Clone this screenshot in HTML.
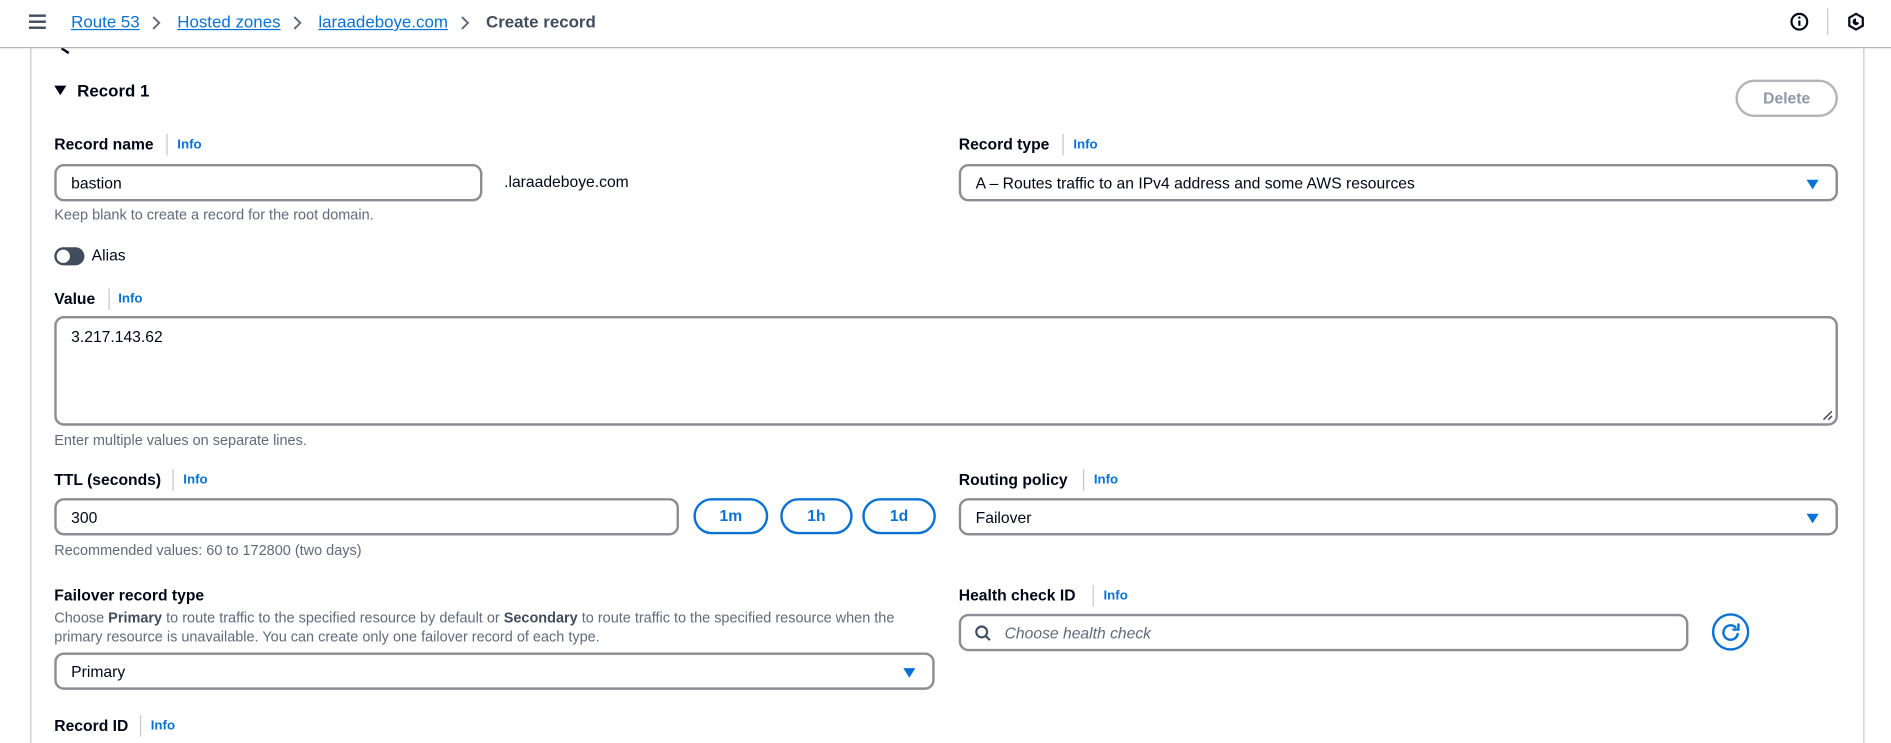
<!DOCTYPE html>
<html><head><meta charset="utf-8"><style>
*{box-sizing:border-box;margin:0;padding:0}
html,body{width:1891px;height:743px;overflow:hidden;background:#fff}
#w{position:absolute;left:0;top:0;width:1568px;height:616px;transform:scale(1.206);transform-origin:0 0;font-family:"Liberation Sans",sans-serif;color:#000716;font-size:13px}
.a{position:absolute;white-space:nowrap}
.lbl{font-weight:bold;font-size:13px}
.info{color:#0972d3;font-weight:bold;font-size:11px}
.sep{position:absolute;width:1px;height:18px;background:#c6c6cd}
.hint{color:#5f6b7a;font-size:12px}
.inp{position:absolute;border:2px solid #8c8c94;border-radius:8px;background:#fff}
.inp span{position:absolute;left:12px;top:50%;transform:translateY(-50%);font-size:13px;white-space:nowrap}
.tri{position:absolute;right:14px;top:11px;width:0;height:0;border-left:5px solid transparent;border-right:5px solid transparent;border-top:8px solid #0972d3}
.pb{position:absolute;border:2px solid #0972d3;border-radius:16px;color:#0972d3;font-weight:bold;font-size:13px;text-align:center;line-height:26px}
.bc{color:#0972d3;text-decoration:underline;font-size:14px}
</style></head><body><div id="w">
<!-- header -->
<div class="a" style="left:24px;top:12px;width:14px;height:2px;background:#414d5c;box-shadow:0 5px 0 #414d5c,0 10px 0 #414d5c"></div>
<div class="a bc" style="left:59px;top:10px">Route 53</div>
<svg class="a" style="left:125px;top:12px" width="10" height="14"><path d="M2 2l5 5-5 5" stroke="#5f6b7a" stroke-width="1.6" fill="none"/></svg>
<div class="a bc" style="left:147px;top:10px">Hosted zones</div>
<svg class="a" style="left:242px;top:12px" width="10" height="14"><path d="M2 2l5 5-5 5" stroke="#5f6b7a" stroke-width="1.6" fill="none"/></svg>
<div class="a bc" style="left:264px;top:10px">laraadeboye.com</div>
<svg class="a" style="left:381px;top:12px" width="10" height="14"><path d="M2 2l5 5-5 5" stroke="#5f6b7a" stroke-width="1.6" fill="none"/></svg>
<div class="a" style="left:403px;top:10px;font-size:14px;font-weight:bold;color:#414d5c">Create record</div>
<svg class="a" style="left:1484px;top:10px" width="16" height="16"><circle cx="8" cy="8" r="6.5" stroke="#000716" stroke-width="1.8" fill="none"/><path d="M8 7v4.5" stroke="#000716" stroke-width="1.8"/><circle cx="8" cy="4.6" r="1" fill="#000716"/></svg>
<div class="a" style="left:1515px;top:7px;width:1px;height:22px;background:#c6c6cd"></div>
<svg class="a" style="left:1531px;top:10px" width="16" height="16"><path d="M8 1.5l5.6 3.2v6.6L8 14.5 2.4 11.3V4.7z" stroke="#000716" stroke-width="1.8" fill="none"/><path d="M8 5.2a2.8 2.8 0 1 0 2.6 3.8L8 8z" fill="#000716"/></svg>
<div class="a" style="left:0;top:39px;width:1568px;height:1px;background:#b4b4bb"></div>
<div class="a" style="left:25px;top:40px;width:1px;height:576px;background:#c6c6cd"></div>
<div class="a" style="left:1545px;top:40px;width:1px;height:576px;background:#c6c6cd"></div>
<svg class="a" style="left:50px;top:40px" width="12" height="5"><path d="M1 0l6 4" stroke="#000716" stroke-width="2"/></svg>
<!-- record 1 -->
<div class="a" style="left:45px;top:71px;width:0;height:0;border-left:5px solid transparent;border-right:5px solid transparent;border-top:8px solid #000716"></div>
<div class="a lbl" style="left:64px;top:67px;font-size:14px">Record 1</div>
<div class="a" style="left:1439px;top:66px;width:85px;height:31px;border:2px solid #b4b4bb;border-radius:16px;color:#8d99a8;font-weight:bold;text-align:center;line-height:27px">Delete</div>

<div class="a lbl" style="left:45px;top:112px">Record name</div><div class="sep" style="left:138px;top:111px"></div><div class="a info" style="left:147px;top:114px">Info</div>
<div class="inp" style="left:45px;top:136px;width:355px;height:31px"><span>bastion</span></div>
<div class="a" style="left:418px;top:143px">.laraadeboye.com</div>
<div class="a hint" style="left:45px;top:171px">Keep blank to create a record for the root domain.</div>

<div class="a lbl" style="left:795px;top:112px">Record type</div><div class="sep" style="left:881px;top:111px"></div><div class="a info" style="left:890px;top:114px">Info</div>
<div class="inp" style="left:795px;top:136px;width:729px;height:31px"><span>A – Routes traffic to an IPv4 address and some AWS resources</span><div class="tri"></div></div>

<div class="a" style="left:45px;top:205px;width:25px;height:15px;border-radius:8px;background:#414d5c"></div>
<div class="a" style="left:47px;top:207px;width:11px;height:11px;border-radius:50%;background:#fff"></div>
<div class="a" style="left:76px;top:204px;font-size:13px">Alias</div>

<div class="a lbl" style="left:45px;top:240px">Value</div><div class="sep" style="left:90px;top:239px"></div><div class="a info" style="left:98px;top:242px">Info</div>
<div class="inp" style="left:45px;top:262px;width:1479px;height:91px"><span style="top:15px">3.217.143.62</span>
<svg style="position:absolute;right:2px;bottom:2px" width="10" height="10"><path d="M9 2L2 9M9 6L6 9" stroke="#414d5c" stroke-width="1.2"/></svg></div>
<div class="a hint" style="left:45px;top:358px">Enter multiple values on separate lines.</div>

<div class="a lbl" style="left:45px;top:390px">TTL (seconds)</div><div class="sep" style="left:143px;top:389px"></div><div class="a info" style="left:152px;top:392px">Info</div>
<div class="inp" style="left:45px;top:413px;width:518px;height:31px"><span>300</span></div>
<div class="pb" style="left:575px;top:413px;width:62px;height:30px">1m</div>
<div class="pb" style="left:647px;top:413px;width:60px;height:30px">1h</div>
<div class="pb" style="left:715px;top:413px;width:61px;height:30px">1d</div>
<div class="a hint" style="left:45px;top:449px">Recommended values: 60 to 172800 (two days)</div>

<div class="a lbl" style="left:795px;top:390px">Routing policy</div><div class="sep" style="left:898px;top:389px"></div><div class="a info" style="left:907px;top:392px">Info</div>
<div class="inp" style="left:795px;top:413px;width:729px;height:31px"><span>Failover</span><div class="tri"></div></div>

<div class="a lbl" style="left:45px;top:486px">Failover record type</div>
<div class="a hint" style="left:45px;top:504px;line-height:16px">Choose <b style="color:#414d5c">Primary</b> to route traffic to the specified resource by default or <b style="color:#414d5c">Secondary</b> to route traffic to the specified resource when the<br>primary resource is unavailable. You can create only one failover record of each type.</div>
<div class="inp" style="left:45px;top:541px;width:730px;height:31px"><span>Primary</span><div class="tri"></div></div>

<div class="a lbl" style="left:795px;top:486px">Health check ID</div><div class="sep" style="left:906px;top:485px"></div><div class="a info" style="left:915px;top:488px">Info</div>
<div class="inp" style="left:795px;top:509px;width:605px;height:31px"><svg style="position:absolute;left:11px;top:7px" width="14" height="14"><circle cx="6" cy="6" r="4.5" stroke="#414d5c" stroke-width="1.8" fill="none"/><path d="M9.3 9.3l3.5 3.5" stroke="#414d5c" stroke-width="1.8"/></svg><span style="left:36px;font-style:italic;color:#5f6b7a">Choose health check</span></div>
<svg class="a" style="left:1419px;top:508px" width="32" height="32"><circle cx="16" cy="16" r="14.5" stroke="#0972d3" stroke-width="2" fill="none"/><path d="M20.5 12.5A6 6 0 1 0 22 17" stroke="#0972d3" stroke-width="2" fill="none"/><path d="M22.5 9v5h-5" stroke="#0972d3" stroke-width="2" fill="none"/></svg>

<div class="a lbl" style="left:45px;top:594px">Record ID</div><div class="sep" style="left:116px;top:593px"></div><div class="a info" style="left:125px;top:596px">Info</div>
</div></body></html>
